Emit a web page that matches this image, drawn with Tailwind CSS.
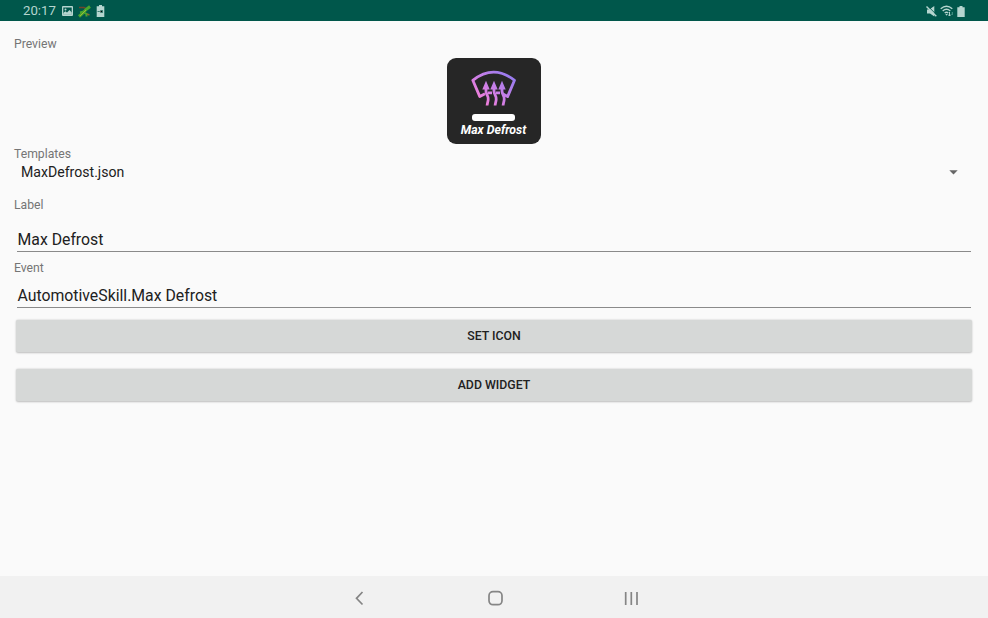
<!DOCTYPE html>
<html lang="en">
<head>
<meta charset="utf-8">
<title>Widget editor</title>
<script src="https://cdn.jsdelivr.net/npm/@tailwindcss/browser@4"></script>
</head>
<body class="flex h-screen flex-col overflow-hidden bg-[#fafafa] font-[Roboto,sans-serif] text-[#212121]">
<header class="flex h-[21px] shrink-0 items-center bg-[#00574b] pl-[23px] pr-[22px] pt-px text-[#b5d5cf]">
  <span class="w-[39px] text-[13.200px] leading-[20px]">20:17</span>
  <svg class="h-[10px] w-[11px]" viewBox="0 0 11 10"><path fill="currentColor" fill-rule="evenodd" d="M1 0h9a1 1 0 0 1 1 1v8a1 1 0 0 1-1 1H1a1 1 0 0 1-1-1V1a1 1 0 0 1 1-1zM1.300 1.500v6.800h8.400V1.500z"/><circle cx="3.500" cy="3.600" r="1" fill="currentColor"/><path fill="currentColor" d="M1.300 8.500V7l2-1.800 1.700 1.300L7.500 4l2.300 2.500v2z"/></svg>
  <svg class="ml-[5px] h-[13px] w-[13px]" viewBox="0 0 13 13" fill="none"><path stroke="#70452c" stroke-width="1.500" d="M1 2.500h5l2 1"/><path stroke="#48a72e" stroke-width="3" d="M1 11.500L5 8l3-3.500L12 1.500"/><path stroke="#48a72e" stroke-width="2" d="M6 7.500l2.500 1.500v2.500M2 7.500l4-1"/><path stroke="#87702c" stroke-width="1.500" d="M9 9l2.500 1"/><path stroke="#9bb63c" d="M2 11l6-6"/></svg>
  <svg class="ml-[5px] h-[12px] w-[9px]" viewBox="0 0 9 12"><path fill="currentColor" d="M3 0h3v1.300H8.300V12H.7V1.300H3z"/><path stroke="#3b7f73" d="M1.500 6.500h2.300M4.500 5.500h2v2h-2"/></svg>
  <div class="ml-auto mr-px flex items-center gap-[3px]">
    <svg class="h-[11px] w-[11px]" viewBox="0 0 11 11"><path fill="currentColor" d="M1 3.500h2.300L8.300 0v10.500L4 7.500H1z"/><path stroke="#00574b" stroke-width="1" d="M1.700 0l9 9"/><path stroke="currentColor" stroke-width="1.400" d="M.5.500l9.800 9.800"/></svg>
    <svg class="h-[12px] w-[14px]" viewBox="0 0 14 12" fill="none" stroke="currentColor" stroke-width="1.400"><path d="M.7 3.800Q6.500-1.200 12.300 3.800M2.700 6Q6.500 2.700 10.300 6M4.700 8.100Q6.500 6.500 8.300 8.100"/><path fill="currentColor" stroke="none" d="M5.300 9h2.400L6.500 10.800z"/><path stroke-width="1" d="M9.500 7v4M8 9.500l1.500 1.500L11 9.500"/><path stroke="#4b9a8c" stroke-width="1" d="M12.300 10V7"/></svg>
    <svg class="h-[11px] w-[8px]" viewBox="0 0 8 11"><path fill="currentColor" d="M2.500 0h3v1.300H7.700V11H.3V1.300h2.200z"/></svg>
  </div>
</header>
<main class="flex flex-1 flex-col px-[14px] pt-[15px]">
  <p class="h-[22px] text-[12.200px] leading-[16px] text-[#757575]">Preview</p>
  <div class="flex h-[86px] w-[94px] flex-col items-center self-center rounded-[9px] bg-[#262626] pr-px pt-[12px]">
    <svg class="h-[37px] w-[46px] shrink-0" viewBox="0 0 46 37" fill="none">
      <defs><linearGradient id="frost" gradientUnits="userSpaceOnUse" x1="8" y1="32" x2="34" y2="2"><stop stop-color="#f57fd8"/><stop offset=".45" stop-color="#cd7fe6"/><stop offset="1" stop-color="#9a7cee"/></linearGradient></defs>
      <g stroke="url(#frost)" stroke-width="2.800" stroke-linejoin="round">
        <path d="M14 23.800L8.800 26.600L1.800 10.300Q22.700-6 43.500 10.300L36.600 26.600L31.500 23.800M17 22.900h4M25 22.900h4"/>
        <path d="M15 16v5c0 4 2.700 4.500 2.200 8.500c-.2 2.500-.9 3.500-1.100 6M23 16v5c0 4 2.700 4.500 2.200 8.500c-.2 2.500-.9 3.500-1.100 6M31 16v5c0 4 2.700 4.500 2.200 8.500c-.2 2.500-.9 3.500-1.100 6"/>
      </g>
      <path fill="url(#frost)" d="M15 10.700l3.700 8.800h-7.400zM23 10.700l3.700 8.800h-7.400zM31 10.700l3.700 8.800h-7.400z"/>
    </svg>
    <div class="mt-[7px] h-[7px] w-[43px] shrink-0 rounded-[3px] bg-white"></div>
    <span class="mt-[1px] whitespace-nowrap text-[12.300px] font-bold italic leading-[16px] text-white">Max Defrost</span>
  </div>
  <label class="mt-[1px] h-[18px] text-[12.200px] leading-[18px] text-[#757575]">Templates</label>
  <div class="flex h-[18px] items-center justify-between pl-[7px] pr-[16px]">
    <span class="text-[14.100px] leading-[18px]">MaxDefrost.json</span>
    <svg class="h-[5px] w-[9px]" viewBox="0 0 9 5"><path fill="#666" d="M.3.300h8.400L4.500 4.600z"/></svg>
  </div>
  <label class="mt-[16px] h-[16px] text-[12.200px] leading-[16px] text-[#757575]">Label</label>
  <div class="mx-[3px] mt-[14px] h-[25px] border-b border-[#8a8a8a] pl-[0.500px] text-[15.800px] leading-[26px]">Max Defrost</div>
  <label class="mt-[8px] h-[16px] text-[12.200px] leading-[16px] text-[#757575]">Event</label>
  <div class="mx-[3px] mt-[7px] h-[25px] border-b border-[#8a8a8a] pl-[0.500px] text-[15.800px] leading-[26px]">AutomotiveSkill.Max Defrost</div>
  <button class="mx-[2px] mt-[12px] h-[32px] rounded-[2px] bg-[#d6d8d7] text-[12.300px] font-medium leading-[32px] shadow-[0_0.500px_2px_rgba(0,0,0,0.25)]">SET ICON</button>
  <button class="mx-[2px] mt-[17px] h-[32px] rounded-[2px] bg-[#d6d8d7] text-[12.300px] font-medium leading-[32px] shadow-[0_0.500px_2px_rgba(0,0,0,0.25)]">ADD WIDGET</button>
</main>
<nav class="flex h-[42px] shrink-0 items-center justify-center gap-[120px] bg-[#f1f1f1] pt-[2px] pl-[2px] text-[#858585]">
  <svg class="h-4 w-4" viewBox="0 0 16 16" fill="none" stroke="currentColor" stroke-width="1.700"><path d="M11.500 2l-6 6.300 6 6.200"/></svg>
  <svg class="h-4 w-4" viewBox="0 0 16 16" fill="none" stroke="currentColor" stroke-width="1.700"><rect x="2" y="1.700" width="13" height="13" rx="4"/></svg>
  <svg class="h-4 w-4" viewBox="0 0 16 16" fill="none" stroke="currentColor" stroke-width="1.700"><path d="M2.700 2v13M8.300 2v13M14 2v13"/></svg>
</nav>
</body>
</html>
